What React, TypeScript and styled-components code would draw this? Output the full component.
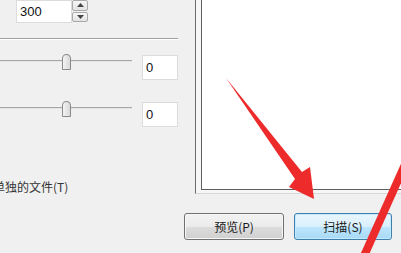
import styled, { createGlobalStyle } from "styled-components";

const GlobalStyle = createGlobalStyle`
  body {
    margin: 0;
    background: #f0f0f0;
    font-family: "Noto Sans CJK SC", "Liberation Sans", sans-serif;
  }
`;

const Window = styled.div`
  position: relative;
  width: 401px;
  height: 253px;
  overflow: hidden;
  background: #f0f0f0;
  display: flex;
  flex-direction: column;
  font-size: 12px;
  color: #222;
`;

const Top = styled.div`
  display: flex;
  height: 194px;
`;

const LeftPane = styled.div`
  width: 180px;
  display: flex;
  flex-direction: column;
`;

const SpinRow = styled.div`
  display: flex;
  padding-left: 16px;
  height: 23px;
`;

const NumberBox = styled.div<{ $w: number; $h: number }>`
  width: ${(p) => p.$w}px;
  height: ${(p) => p.$h}px;
  box-sizing: border-box;
  background: #fff;
  border: 1px solid #dcdcdc;
  display: flex;
  align-items: center;
  padding-left: 3px;
  font-family: "Liberation Sans", sans-serif;
  font-size: 13px;
  color: #111;
`;

const SpinButtons = styled.div`
  display: flex;
  flex-direction: column;
  gap: 1px;
  width: 16px;
  height: 22px;
`;

const SpinBtn = styled.div`
  flex: 1;
  box-sizing: border-box;
  border: 1px solid #a9a9a9;
  border-radius: 2px;
  background: linear-gradient(#f7f7f7, #e2e2e2);
  display: flex;
  align-items: center;
  justify-content: center;
`;

const Separator = styled.div`
  margin-top: 15px;
  width: 178px;
  height: 1px;
  background: #a0a0a0;
  border-bottom: 1px solid #fff;
`;

const SliderRow = styled.div<{ $top: number }>`
  display: flex;
  margin-top: ${(p) => p.$top}px;
  gap: 10px;
`;

const Slider = styled.div`
  position: relative;
  width: 132px;
  height: 18px;
`;

const Track = styled.div`
  position: absolute;
  left: 0;
  right: 0;
  top: 6px;
  height: 1px;
  background: #a7a7a7;
  border-bottom: 1px solid #e4e4e4;
`;

const Thumb = styled.div`
  position: absolute;
  left: 62px;
  top: 0;
  width: 9px;
  height: 16px;
  box-sizing: border-box;
  border: 1px solid #8a8a8a;
  border-radius: 5px 5px 1px 1px;
  background: linear-gradient(90deg, #f4f4f4, #d9d9d9);
`;

const ValueBox = styled(NumberBox)`
  margin-top: 1px;
`;

const OptionLabel = styled.div`
  margin-top: 52px;
  margin-left: -7px;
  white-space: nowrap;
  color: #333;
  font-size: 12px;
  line-height: 15px;
`;

const PreviewPane = styled.div`
  margin-left: 15px;
  flex: 1;
  display: flex;
  border-left: 1px solid #6c6c6c;
  border-bottom: 1px solid #d8d8d8;
  background: #f6f6f6;
  padding: 0 0 3px 5px;
`;

const PreviewFrame = styled.div`
  flex: 1;
  background: #fff;
  border-left: 1px solid #5e5e5e;
  border-bottom: 1px solid #5e5e5e;
`;

const ButtonRow = styled.div`
  display: flex;
  gap: 10px;
  margin-top: 19px;
  padding-left: 184px;
`;

const Button = styled.div<{ $primary?: boolean }>`
  width: ${(p) => (p.$primary ? 98 : 100)}px;
  height: 27px;
  box-sizing: border-box;
  border-radius: 3px;
  border: 1px solid ${(p) => (p.$primary ? "#3c7fb1" : "#707070")};
  background: ${(p) =>
    p.$primary
      ? "linear-gradient(#eaf6fd 0%, #d9f0fc 50%, #bee6fd 51%, #a7d9f5 100%)"
      : "linear-gradient(#f2f2f2 0%, #ebebeb 50%, #dddddd 51%, #cfcfcf 100%)"};
  box-shadow: inset 0 0 0 1px ${(p) => (p.$primary ? "#c7ebfc" : "#f8f8f8")};
  display: flex;
  align-items: center;
  justify-content: center;
  color: #1a1a1a;
  font-size: 12px;
`;

const Overlay = styled.svg`
  position: absolute;
  left: 0;
  top: 0;
  pointer-events: none;
`;

const App = () => {
  return (
    <Window>
      <GlobalStyle />
      <Top>
        <LeftPane>
          <SpinRow>
            <NumberBox $w={56} $h={23}>300</NumberBox>
            <SpinButtons>
              <SpinBtn>
                <svg width="7" height="4" viewBox="0 0 7 4">
                  <path d="M0 4 L3.5 0 L7 4 Z" fill="#444" />
                </svg>
              </SpinBtn>
              <SpinBtn>
                <svg width="7" height="4" viewBox="0 0 7 4">
                  <path d="M0 0 L3.5 4 L7 0 Z" fill="#444" />
                </svg>
              </SpinBtn>
            </SpinButtons>
          </SpinRow>
          <Separator />
          <SliderRow $top={14}>
            <Slider>
              <Track />
              <Thumb />
            </Slider>
            <ValueBox $w={36} $h={25}>0</ValueBox>
          </SliderRow>
          <SliderRow $top={21}>
            <Slider>
              <Track />
              <Thumb />
            </Slider>
            <ValueBox $w={36} $h={25}>0</ValueBox>
          </SliderRow>
          <OptionLabel>单独的文件(T)</OptionLabel>
        </LeftPane>
        <PreviewPane>
          <PreviewFrame />
        </PreviewPane>
      </Top>
      <ButtonRow>
        <Button>预览(P)</Button>
        <Button $primary>扫描(S)</Button>
      </ButtonRow>
      {/* red annotation arrows drawn over the screenshot */}
      <Overlay width="401" height="253" viewBox="0 0 401 253">
        <polygon
          points="226,78 302,172 310,167 314,199 289,187 295,179"
          fill="#ee2b2b"
        />
        <path d="M408 158 L364 256" stroke="#ee2b2b" strokeWidth="8" fill="none" />
      </Overlay>
    </Window>
  );
};

export default App;
